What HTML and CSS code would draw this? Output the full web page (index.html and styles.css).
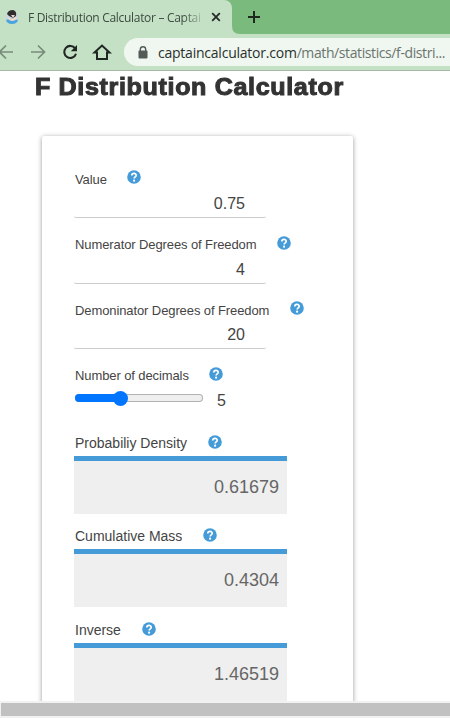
FILE: index.html
```
<!DOCTYPE html>
<html lang="en">
  <head>
    <title>F Distribution Calculator</title>
    <meta charset="utf-8">
    <link rel="stylesheet" href="styles.css">
  </head>
  <body>
  <svg width="0" height="0" class="defs">
    <symbol id="help" viewBox="0 0 14 14">
      <circle cx="7" cy="7" r="6.8" fill="#459bd8"/>
      <path d="M4.8 5.5C4.8 2.6 9.2 2.7 9.2 5.3C9.2 6.8 7.1 6.9 7.1 8.5" fill="none" stroke="#fff" stroke-width="1.7"/>
      <circle cx="7.1" cy="10.7" r="1.1" fill="#fff"/>
    </symbol>
  </svg>

  <div class="tabs">
    <div class="tab">
      <svg class="favicon" width="14" height="16" viewBox="0 0 14 16">
        <circle cx="7" cy="8.5" r="6.5" fill="#c7d6df"/>
        <path d="M1 11Q7 8 13 11Q12 15 7 15Q2 15 1 11Z" fill="#48a5df"/>
        <path d="M3 8Q8 12 11 7L12 10Q7 14 3 10Z" fill="#f2d9c8"/>
        <path d="M2 5Q3 1 8 1Q12 2 11 7L8 9L4 7Z" fill="#302d30"/>
        <path d="M6 6H10L8 9Z" fill="#ead2c5"/>
      </svg>
      <span class="tab-title">F Distribution Calculator – Captai</span>
      <svg class="close" width="10" height="10" viewBox="0 0 10 10"><path d="M1.2 1.2L8.8 8.8M8.8 1.2L1.2 8.8" stroke="#252b27" stroke-width="1.8"/></svg>
    </div>
    <svg class="curve" width="8" height="8" viewBox="0 0 8 8"><path d="M0 0Q0 8 8 8H0Z" fill="#c5e1c5"/></svg>
    <svg class="plus" width="14" height="14" viewBox="0 0 14 14"><path d="M7 1V13M1 7H13" stroke="#1e2a20" stroke-width="2"/></svg>
  </div>

  <div class="toolbar">
    <svg width="124" height="36" viewBox="0 0 124 36" fill="none">
      <path d="M13 18H0M6 11.5L-.5 18L6 24.5M31 18H44M38 11.5L44.5 18L38 24.5" stroke="#788a7b" stroke-width="1.7"/>
      <path d="M75.2 14.5A6 6 0 1 0 76 19.7" stroke="#202723" stroke-width="2.1"/>
      <path d="M77 11V17.2H70.8Z" fill="#202723"/>
      <path d="M94.5 18.5L102 11.5L109.5 18.5H107V25H97V18.5Z" stroke="#202723" stroke-width="2"/>
    </svg>
    <div class="address">
      <svg width="10" height="13" viewBox="0 0 10 13"><path d="M2.3 5V3.4A2.7 2.7 0 0 1 7.7 3.4V5" fill="none" stroke="#535b56" stroke-width="1.4"/><rect x=".5" y="4.5" width="9" height="8" rx="1" fill="#535b56"/></svg>
      <span class="url">captaincalculator.com<span>/math/statistics/f-distri...</span></span>
    </div>
  </div>

  <div class="page">
    <h1>F Distribution Calculator</h1>
    <div class="card">
      <div class="field">
        <div class="label"><span>Value</span><svg class="help"><use href="#help"/></svg></div>
        <div class="input">0.75</div>
      </div>
      <div class="field">
        <div class="label"><span>Numerator Degrees of Freedom</span><svg class="help"><use href="#help"/></svg></div>
        <div class="input">4</div>
      </div>
      <div class="field">
        <div class="label"><span>Demoninator Degrees of Freedom</span><svg class="help"><use href="#help"/></svg></div>
        <div class="input">20</div>
      </div>
      <div class="decimals">
        <div class="label"><span>Number of decimals</span><svg class="help"><use href="#help"/></svg></div>
        <div class="range">
          <div class="track"><div class="thumb"></div></div>
          <span>5</span>
        </div>
      </div>
      <div class="result">
        <div class="label"><span>Probabiliy Density</span><svg class="help"><use href="#help"/></svg></div>
        <div class="output">0.61679</div>
      </div>
      <div class="result">
        <div class="label"><span>Cumulative Mass</span><svg class="help"><use href="#help"/></svg></div>
        <div class="output">0.4304</div>
      </div>
      <div class="result">
        <div class="label"><span>Inverse</span><svg class="help"><use href="#help"/></svg></div>
        <div class="output">1.46519</div>
      </div>
    </div>
  </div>
  <div class="scrollbar"><div></div></div>
  </body>
</html>
```
FILE: styles.css
```
* {
  box-sizing: border-box;
}
body {
  margin: 0;
  width: 450px;
  height: 718px;
  overflow: hidden;
  background: #fff;
  color: #444;
  font-family: "Liberation Sans", Arial, sans-serif;
  font-size: 13px;
}
svg {
  flex: none;
}
.defs {
  display: block;
}
.tabs {
  height: 34px;
  background: #7abb7d;
  display: flex;
}
.tab {
  width: 232px;
  height: 34px;
  background: #c5e1c5;
  border-radius: 0 8px 0 0;
  display: flex;
  align-items: center;
  padding-left: 5px;
}
.tab-title {
  width: 175px;
  margin-left: 9px;
  white-space: nowrap;
  font-family: "Open Sans", sans-serif;
  font-size: 12px;
  letter-spacing: -0.3px;
  color: #3c4a40;
  -webkit-mask-image: linear-gradient(to right, #000 155px, transparent 178px);
}
.close {
  margin-left: 8px;
}
.curve {
  align-self: flex-end;
}
.plus {
  margin: 10px 0 0 7px;
}
.toolbar {
  height: 37px;
  background: #c5e1c5;
  border-bottom: 1px solid #a5b9a6;
  display: flex;
}
.address {
  width: 326px;
  height: 28px;
  margin-top: 4px;
  padding-left: 14px;
  border-radius: 14px 0 0 14px;
  background: #f0f7f1;
  display: flex;
  align-items: center;
  flex: none;
}
.url {
  margin-left: 10px;
  white-space: nowrap;
  font-family: "Open Sans", sans-serif;
  font-size: 14px;
  letter-spacing: -0.23px;
  color: #29312b;
}
.url span {
  color: #6b746d;
  letter-spacing: -0.4px;
}
.page {
  height: 630px;
  overflow: hidden;
}
h1 {
  margin: 0 0 0 35px;
  height: 65px;
  font-size: 23px;
  line-height: 33px;
  letter-spacing: 0.6px;
  white-space: nowrap;
  color: #333;
  -webkit-text-stroke: 1px #333;
  transform: scaleX(1.09);
  transform-origin: 0 0;
}
.card {
  width: 311px;
  height: 600px;
  margin-left: 42px;
  padding: 32px 0 0 32px;
  border-radius: 2px;
  box-shadow: 0 1px 5px rgba(0,0,0,0.4);
}
.label {
  height: 22px;
  display: flex;
  align-items: center;
  white-space: nowrap;
  padding-left: 1px;
  letter-spacing: -0.1px;
}
.help {
  width: 14px;
  height: 14px;
  margin: -4px 0 0 20.6px;
}
.field {
  height: 65.5px;
}
.input {
  width: 192px;
  height: 28px;
  padding-right: 21px;
  border-bottom: 1px solid #ccc;
  border-radius: 2px;
  text-align: right;
  font-size: 16px;
  line-height: 27px;
}
.decimals {
  height: 67.5px;
}
.range {
  height: 23px;
  display: flex;
  align-items: center;
  font-size: 16px;
}
.range > span {
  margin: 5px 0 0 14px;
}
.track {
  width: 128px;
  height: 8px;
  margin-left: 1px;
  box-shadow: inset 0 0 0 1px #b2b2b2;
  border-radius: 4px;
  background: #efefef;
}
.track::before {
  content: "";
  display: block;
  width: 45px;
  height: 8px;
  border-radius: 4px 0 0 4px;
  background: #0075ff;
}
.thumb {
  width: 15px;
  height: 15px;
  margin: -11.5px 0 0 38px;
  border-radius: 50%;
  background: #0075ff;
}
.result {
  height: 93.3px;
  font-size: 14px;
}
.result .label {
  height: 22px;
  margin-bottom: 2px;
  letter-spacing: 0;
}
.result .help {
  margin-top: -2px;
}
.output {
  width: 213px;
  height: 58px;
  padding-right: 8px;
  border-top: 5px solid #459bd8;
  background: #efefef;
  color: #666;
  text-align: right;
  font-size: 18px;
  line-height: 53px;
}
.result:last-child .output {
  height: 70px;
}
.scrollbar {
  height: 17px;
  padding: 2px 0 2px 1px;
  background: #f1f1f1;
}
.scrollbar div {
  height: 13px;
  background: #c1c1c1;
}
```
